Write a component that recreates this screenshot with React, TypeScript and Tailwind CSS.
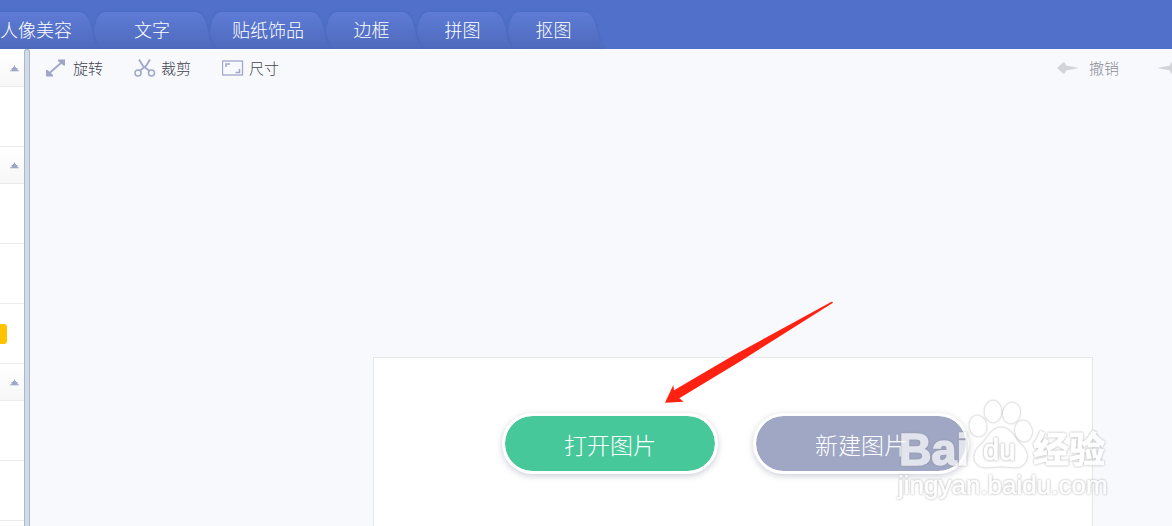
import type { ReactNode } from "react";

const tabs = [
  { label: "人像美容", width: 116, className: "w-[116px]" },
  { label: "文字", width: 116, className: "w-[116px]" },
  { label: "贴纸饰品", width: 116, className: "w-[116px]" },
  { label: "边框", width: 91, className: "w-[91px]" },
  { label: "拼图", width: 91, className: "w-[91px]" },
  { label: "抠图", width: 91, className: "w-[91px]" },
];

const sideRows = [
  "head",
  "item",
  "head",
  "item",
  "item",
  "badge",
  "head",
  "item",
  "item",
  "item",
];

function TabShape({ width: w }: { width: number }) {
  return (
    <svg
      width={w}
      height="37"
      className="absolute inset-0 -z-10 overflow-visible"
      aria-hidden="true"
    >
      <path
        d={`M9 37 C3 32 1 25 0 21 C1 12 3 0 12 0 H${w - 15} C${w - 7} 0 ${w - 4} 10 ${w - 2} 18 C${w} 28 ${w + 3} 34 ${w + 6} 37 Z`}
        fill="url(#tab-fill)"
        filter="url(#tab-shadow)"
      />
    </svg>
  );
}

function Header() {
  return (
    <header className="h-[49px] overflow-hidden bg-[#5170c9] pt-3">
      <svg width="0" height="0" className="absolute" aria-hidden="true">
        <defs>
          <linearGradient id="tab-fill" x1="0" y1="0" x2="0" y2="1">
            <stop offset="0" stopColor="#5e7bd6" />
            <stop offset="1" stopColor="#4e6abc" />
          </linearGradient>
          <filter id="tab-shadow" x="-10%" y="-20%" width="120%" height="140%">
            <feDropShadow dx="0" dy="0" stdDeviation="1.5" floodColor="#2c458f" floodOpacity="0.3" />
          </filter>
        </defs>
      </svg>
      <nav className="-ml-[22px] flex">
        {tabs.map((t) => (
          <button
            key={t.label}
            className={`relative isolate h-[37px] shrink-0 pb-1 text-center text-[18px] leading-8 text-white ${t.className}`}
          >
            <TabShape width={t.width} />
            {t.label}
          </button>
        ))}
      </nav>
    </header>
  );
}

function Sidebar() {
  return (
    <aside className="flex w-[30px] shrink-0">
      <div className="w-6 bg-white pt-px">
        {sideRows.map((kind, i) =>
          kind === "head" ? (
            <button
              key={i}
              aria-label="收起"
              className="flex h-[37px] w-full items-center justify-end border-b border-[#ebebeb] bg-linear-to-b from-white to-[#f7f7f7] pr-[5px]"
            >
              <svg width="9" height="7" viewBox="0 0 9 7" fill="#a0a6c8" aria-hidden="true">
                <path d="M4 0.500h1V2h1v1h1.500v3h-6V3H3V2h1z" />
                <path d="M0 5h9v1.500H0z" opacity="0.6" />
              </svg>
            </button>
          ) : (
            <div key={i} className="flex h-[60px] items-center border-b border-[#ebebeb]">
              {kind === "badge" && <span className="h-5 w-[7px] rounded-r-[3px] bg-[#ffc300]" />}
            </div>
          )
        )}
      </div>
      <div className="w-[6px] rounded-t-[3px] border border-b-0 border-[#a9b6cb] bg-[#d1dae6]" />
    </aside>
  );
}

function RotateIcon() {
  return (
    <svg width="22" height="18" viewBox="0 0 22 18" aria-hidden="true">
      <path d="M3 14.500L16 3" stroke="#9fa6c8" strokeWidth="1.8" />
      <path d="M12 0.500h7v6h-1.500L12 2z" fill="#9fa6c8" />
      <path d="M0 11h1.500l5.500 5V17.500H0z" fill="#9fa6c8" />
    </svg>
  );
}

function CutIcon() {
  return (
    <svg width="22" height="18" viewBox="0 0 22 18" fill="none" stroke="#9fa6c8" aria-hidden="true">
      <path d="M5 0.500L9 7L15.500 12M16 0.500L12 7L5.500 12" strokeWidth="1.8" />
      <circle cx="4" cy="14" r="3" strokeWidth="1.500" />
      <circle cx="17.500" cy="14" r="3" strokeWidth="1.500" />
    </svg>
  );
}

function SizeIcon() {
  return (
    <svg width="22" height="16" viewBox="0 0 22 16" fill="none" stroke="#9fa6c8" aria-hidden="true">
      <rect x="0.500" y="1" width="20" height="14" strokeWidth="1.3" />
      <path d="M4 7V4h4M13.500 12.500h4V9" strokeWidth="1.5" />
    </svg>
  );
}

function HistoryArrow({ flip }: { flip?: boolean }) {
  return (
    <svg
      width="22"
      height="14"
      viewBox="0 0 22 14"
      className={flip ? "shrink-0 -scale-x-100" : "shrink-0"}
      aria-hidden="true"
    >
      <path d="M0 7L6 1.500h2l1 3 8 1.500 5 1-5 1-8 1.500-1 3H6z" fill="#d2d4da" />
    </svg>
  );
}

function Tool({ icon, label }: { icon: ReactNode; label: string }) {
  return (
    <button className="flex items-center gap-[5px] text-[15px] leading-5 text-[#42444f]">
      {icon}
      {label}
    </button>
  );
}

function Toolbar() {
  return (
    <div className="flex h-[38px] items-center gap-[31px] overflow-hidden pl-4">
      <Tool icon={<RotateIcon />} label="旋转" />
      <Tool icon={<CutIcon />} label="裁剪" />
      <Tool icon={<SizeIcon />} label="尺寸" />
      <div className="ml-auto flex items-center gap-[38px]">
        <button className="flex items-center gap-[10px] text-[15px] leading-5 text-[#8e8f96]">
          <HistoryArrow />
          撤销
        </button>
        <button aria-label="重做" className="flex w-[15px] overflow-hidden">
          <HistoryArrow flip />
        </button>
      </div>
    </div>
  );
}

function Pointer() {
  return (
    <svg
      width="170"
      height="104"
      viewBox="664 301 170 104"
      className="pointer-events-none absolute -top-[57px] left-[290px]"
      aria-hidden="true"
    >
      <path
        d="M665 402.700L673.300 385L674 390.300L735 354.500L832 301.500L833 302.800L740 361.500L679.300 398.300L683.700 401.700Z"
        fill="#ff2213"
      />
    </svg>
  );
}

function Watermark() {
  return (
    <svg
      width="216"
      height="104"
      viewBox="896 398 216 104"
      className="pointer-events-none absolute top-10 -right-5 opacity-70 drop-shadow-[0_0_1px_#888888]"
      fill="#fff"
      stroke="#fff"
      aria-hidden="true"
    >
      <g fontFamily="'Liberation Sans', sans-serif">
        <text x="899" y="465" fontSize="45" fontWeight="bold" strokeWidth="1.5">Bai</text>
        <text x="898" y="494" fontSize="26" strokeWidth="0.5">jingyan.baidu.com</text>
      </g>
      <ellipse cx="978" cy="426" rx="8" ry="10" transform="rotate(-12 978 426)" />
      <ellipse cx="993" cy="411.500" rx="8" ry="10.500" />
      <ellipse cx="1011.500" cy="413" rx="8" ry="10" transform="rotate(12 1011.500 413)" />
      <ellipse cx="1023.500" cy="431" rx="8" ry="10" transform="rotate(-12 1023.500 431)" />
      <path d="M1001 428C992 428 989 437 983 443C976 449 973 456 976 462C981 470 991 466 1001 466C1011 466 1020 470 1025 462C1029 455 1025 448 1018 442C1013 436 1010 428 1001 428Z" />
      <text
        x="983"
        y="460"
        fontSize="29"
        strokeWidth="1"
        fontFamily="'Liberation Sans', sans-serif"
        className="drop-shadow-[0_0_1px_#777777]"
      >
        du
      </text>
      <text
        x="1033"
        y="463"
        fontSize="36"
        fontWeight="bold"
        strokeWidth="1"
        fontFamily="'Noto Sans CJK SC', sans-serif"
      >
        经验
      </text>
    </svg>
  );
}

function StartPanel() {
  return (
    <section className="relative mt-[270px] mr-[79px] ml-[343px] flex flex-1 items-start gap-[35px] border border-b-0 border-[#e5e6ea] bg-white pt-[55px] pl-32">
      <button className="h-[61px] w-[216px] shrink-0 rounded-full border-3 border-white bg-[#46c89a] bg-clip-padding text-[23px] leading-[54px] text-white shadow-[0_2px_6px_rgba(90,95,130,0.3)]">
        打开图片
      </button>
      <button className="h-[61px] w-[216px] shrink-0 rounded-full border-3 border-white bg-[#9fa7c5] bg-clip-padding text-[23px] leading-[54px] text-white shadow-[0_2px_6px_rgba(90,95,130,0.3)]">
        新建图片
      </button>
      <Pointer />
      <Watermark />
    </section>
  );
}

export default function App() {
  return (
    <div className="flex h-screen flex-col overflow-hidden bg-[#f8f9fd] font-['Noto_Sans_CJK_SC',sans-serif] font-light">
      <Header />
      <div className="flex min-h-0 flex-1">
        <Sidebar />
        <main className="flex min-w-0 flex-1 flex-col">
          <Toolbar />
          <StartPanel />
        </main>
      </div>
    </div>
  );
}
